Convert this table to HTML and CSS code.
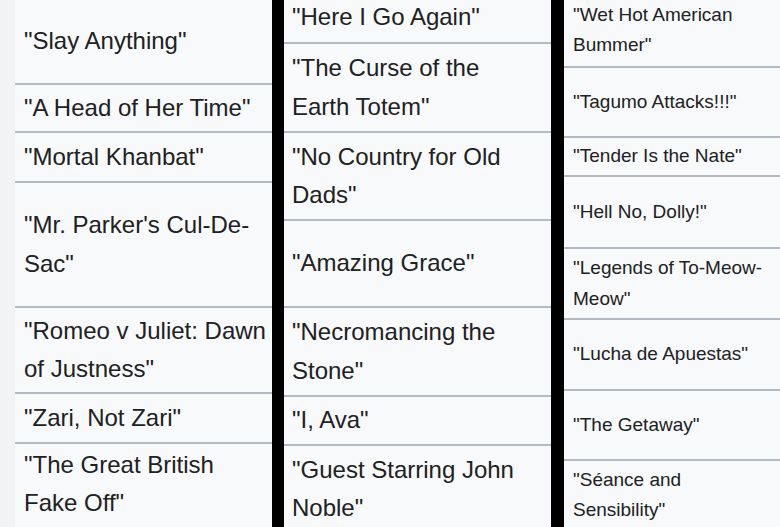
FILE: index.html
```html
<!DOCTYPE html>
<html lang="en">
<head>
<meta charset="utf-8">
<title>Episode list</title>
<link rel="stylesheet" href="styles.css">
</head>
<body>
<div class="page">
  <div class="gutter"></div>
  <div class="col col-left">
    <div class="cell">"Slay Anything"</div>
    <div class="cell">"A Head of Her Time"</div>
    <div class="cell">"Mortal Khanbat"</div>
    <div class="cell">"Mr. Parker's Cul-De-Sac"</div>
    <div class="cell">"Romeo v Juliet: Dawn of Justness"</div>
    <div class="cell">"Zari, Not Zari"</div>
    <div class="cell cell-last">"The Great British Fake Off"</div>
  </div>
  <div class="bar"></div>
  <div class="col col-mid">
    <div class="cell cell-first">"Here I Go Again"</div>
    <div class="cell">"The Curse of the Earth Totem"</div>
    <div class="cell">"No Country for Old Dads"</div>
    <div class="cell">"Amazing Grace"</div>
    <div class="cell">"Necromancing the Stone"</div>
    <div class="cell">"I, Ava"</div>
    <div class="cell cell-last">"Guest Starring John Noble"</div>
  </div>
  <div class="bar bar-wide"></div>
  <div class="col col-right">
    <div class="cell cell-first">"Wet Hot American Bummer"</div>
    <div class="cell">"Tagumo Attacks!!!"</div>
    <div class="cell">"Tender Is the Nate"</div>
    <div class="cell">"Hell No, Dolly!"</div>
    <div class="cell">"Legends of To-Meow-Meow"</div>
    <div class="cell">"Lucha de Apuestas"</div>
    <div class="cell">"The Getaway"</div>
    <div class="cell cell-last">"Séance and Sensibility"</div>
  </div>
</div>
</body>
</html>
```

FILE: styles.css
```css
* {
  box-sizing: border-box;
}

html,
body {
  margin: 0;
  padding: 0;
  width: 780px;
  height: 527px;
  overflow: hidden;
  background: #f8f9fa;
}

.page {
  display: flex;
  width: 780px;
  height: 527px;
  font-family: "Liberation Sans", Arial, Helvetica, sans-serif;
  color: #202122;
}

.gutter {
  width: 15px;
  flex: none;
  background: #f2f3f4;
}

.bar {
  width: 12px;
  flex: none;
  background: #000;
}

.bar-wide {
  width: 13px;
}

.col {
  display: grid;
  flex: none;
  height: 527px;
  background: #f8f9fa;
}

.cell {
  display: flex;
  align-items: center;
  border-bottom: 2px solid #b4bac1;
  overflow: hidden;
}

.cell-last {
  border-bottom: none;
  align-items: flex-start;
}

.col-left {
  width: 257px;
  grid-template-rows: 85px 48px 50px 125px 86px 50px 1fr;
  font-size: 24px;
  line-height: 1.6;
}

.col-left .cell {
  padding: 0 3px 0 9px;
}

.col-left .cell-last {
  padding-top: 2px;
}

.col-mid {
  width: 267px;
  grid-template-rows: 44px 89px 88px 87px 89px 49px 1fr;
  font-size: 24px;
  line-height: 1.6;
}

.col-mid .cell {
  padding: 0 19px 0 8px;
}

.col-mid .cell-first {
  align-items: flex-end;
  padding-bottom: 6px;
}

.col-mid .cell-last {
  padding-top: 5px;
}

.col-right {
  width: 216px;
  grid-template-rows: 68px 70px 39px 72px 71px 71px 70px 1fr;
  font-size: 19px;
  line-height: 1.6;
}

.col-right .cell {
  padding: 0 9px 0 9px;
}

.col-right .cell-first {
  align-items: flex-start;
  padding-top: 0;
}

.col-right .cell-last {
  padding-top: 4px;
}
```
